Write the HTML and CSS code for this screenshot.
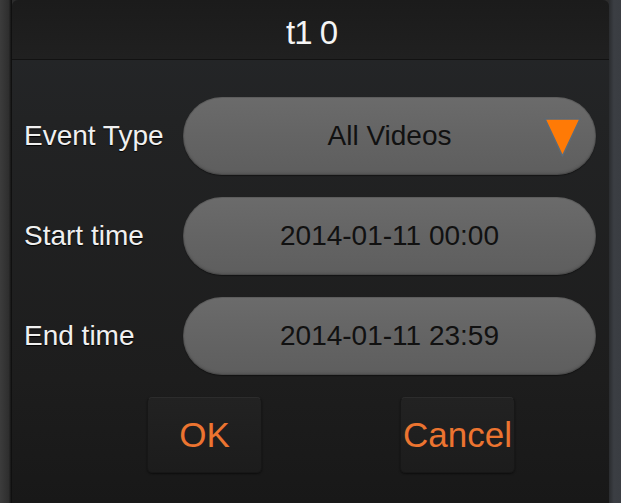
FILE: index.html
```html
<!DOCTYPE html>
<html>
<head>
<meta charset="utf-8">
<link rel="stylesheet" href="styles.css">
</head>
<body>
<div class="screen">
  <div class="edge-left"></div>
  <div class="panel">
    <div class="header"><span class="title">t1 0</span></div>
    <div class="form">
      <div class="row">
        <div class="label">Event Type</div>
        <div class="field">
          <span class="value">All Videos</span>
          <svg class="caret" width="39" height="41" viewBox="0 0 39 41">
            <polygon points="2,2 37,2 19.5,39" fill="#ff7a06" stroke="#5d6a76" stroke-width="1.6" stroke-linejoin="round"/>
          </svg>
        </div>
      </div>
      <div class="row">
        <div class="label">Start time</div>
        <div class="field"><span class="value">2014-01-11 00:00</span></div>
      </div>
      <div class="row">
        <div class="label">End time</div>
        <div class="field"><span class="value">2014-01-11 23:59</span></div>
      </div>
    </div>
    <div class="actions">
      <div class="btn">OK</div>
      <div class="btn">Cancel</div>
    </div>
  </div>
  <div class="edge-right"></div>
</div>
</body>
</html>
```
FILE: styles.css
```css
html, body {
  margin: 0;
  padding: 0;
  width: 621px;
  height: 503px;
  overflow: hidden;
  background: #2c2c2c;
  font-family: "Liberation Sans", Arial, sans-serif;
}

.screen {
  display: flex;
  width: 621px;
  height: 503px;
}

.edge-left {
  width: 11px;
  background: linear-gradient(to right, #3c3c3c, #2e2e2e 80%, #151515);
  border-right: 1px solid #101010;
}

.edge-right {
  width: 12px;
  background: linear-gradient(to right, #2a2c2f, #3b3e43 40%, #3a3d42);
}

.panel {
  flex: 1;
  display: flex;
  flex-direction: column;
  background: linear-gradient(to bottom, #25272a 0px, #222324 120px, #1d1d1d 380px, #181818 503px);
  border-top-left-radius: 6px;
  border-top-right-radius: 6px;
  overflow: hidden;
}

.header {
  height: 59px;
  border-bottom: 1px solid #121212;
  background: linear-gradient(to bottom, #1b1b1b, #202020);
  display: flex;
  align-items: center;
  justify-content: center;
}

.title {
  color: #f4f4f4;
  font-size: 33px;
  letter-spacing: -1px;
  padding-top: 6px;
  padding-left: 2px;
}

.form {
  display: flex;
  flex-direction: column;
  gap: 22px;
  padding: 37px 13px 0 12px;
}

.row {
  display: flex;
  align-items: center;
  height: 78px;
}

.label {
  width: 159px;
  color: #f0f0f0;
  font-size: 28px;
  text-shadow: 0 1px 1px #000;
}

.field {
  position: relative;
  flex: 1;
  height: 78px;
  border-radius: 39px;
  background: linear-gradient(to bottom, #6b6b6b, #646464 50%, #5e5e5e);
  box-shadow: inset 0 0 0 1px rgba(0,0,0,0.12), inset 0 -2px 3px rgba(0,0,0,0.12), 0 1px 1px rgba(0,0,0,0.4);
  display: flex;
  align-items: center;
  justify-content: center;
}

.value {
  color: #111;
  font-size: 28px;
}

.caret {
  position: absolute;
  right: 14px;
  top: 20px;
}

.actions {
  display: flex;
  gap: 138px;
  padding: 22px 0 0 135px;
}

.btn {
  width: 113px;
  height: 74px;
  border: 1px solid #171717;
  border-top-color: #2c2c2c;
  border-radius: 5px;
  background: linear-gradient(to bottom, #222222, #1c1c1c);
  box-shadow: 0 1px 2px rgba(0,0,0,0.5);
  display: flex;
  align-items: center;
  justify-content: center;
  color: #ec7430;
  font-size: 35px;
}
```
